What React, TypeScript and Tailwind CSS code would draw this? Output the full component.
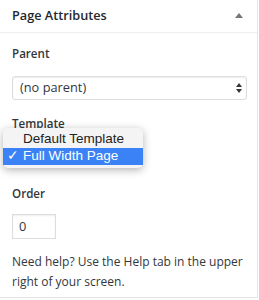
export default function App() {
  return (
    <div className="h-[300px] w-[259px] bg-white" style={{ fontFamily: '"Open Sans", sans-serif' }}>
      <div className="h-[298px] w-[258px] border-r border-b border-[#e2e4e7] text-[#32373c]">
        <div className="flex h-[33px] items-center justify-between border-b border-[#eeeeee] pl-3 pr-[14px]">
          <span className="text-[12.7px] font-semibold text-[#23282d]">Page Attributes</span>
          <svg width="8" height="5" viewBox="0 0 8 5" className="mt-[-2px]">
            <path d="M4 0 L8 5 L0 5 Z" fill="#72777c" />
          </svg>
        </div>
        <div className="relative px-3">
          <p className="pt-[11px] text-[11.6px] font-semibold leading-[19px]">Parent</p>
          <div className="mt-[13px] flex h-[24px] w-[235px] items-center justify-between rounded-[3px] border border-[#dddddd] pl-[7px] pr-[4px] text-[12.8px] shadow-[inset_0_1px_2px_rgba(0,0,0,0.07)]">
            <span>(no parent)</span>
            <svg width="6" height="10" viewBox="0 0 6 10">
              <path d="M3 0 L6 4 L0 4 Z M3 10 L6 6 L0 6 Z" fill="#32373c" />
            </svg>
          </div>
          <p className="mt-[14px] text-[11.6px] font-semibold leading-[19px]">Template</p>
          <p className="mt-[51px] text-[11.6px] font-semibold leading-[19px]">Order</p>
          <div className="mt-[11px] flex h-[25px] w-[44px] items-center border border-[#dddddd] pl-[6px] text-[12.8px] shadow-[inset_0_1px_2px_rgba(0,0,0,0.07)]">
            0
          </div>
          <p className="mt-[13px] text-[12px] leading-[20px]">
            Need help? Use the Help tab in the upper right of your screen.
          </p>
          <div
            className="absolute left-[3px] top-[95px] w-[140px] rounded-[5px] bg-[#f4f4f4] py-[3px] text-[13.5px] text-[#222] shadow-[0_2px_8px_rgba(0,0,0,0.3)]"
            style={{ fontFamily: '"Liberation Sans", sans-serif' }}
          >
            <div className="flex h-[17px] items-center pl-[20px]">Default Template</div>
            <div className="relative flex h-[17px] items-center bg-[#3a82f6] pl-[20px] text-white">
              <span className="absolute left-[4px]">✓</span>
              Full Width Page
            </div>
          </div>
        </div>
      </div>
    </div>
  );
}
